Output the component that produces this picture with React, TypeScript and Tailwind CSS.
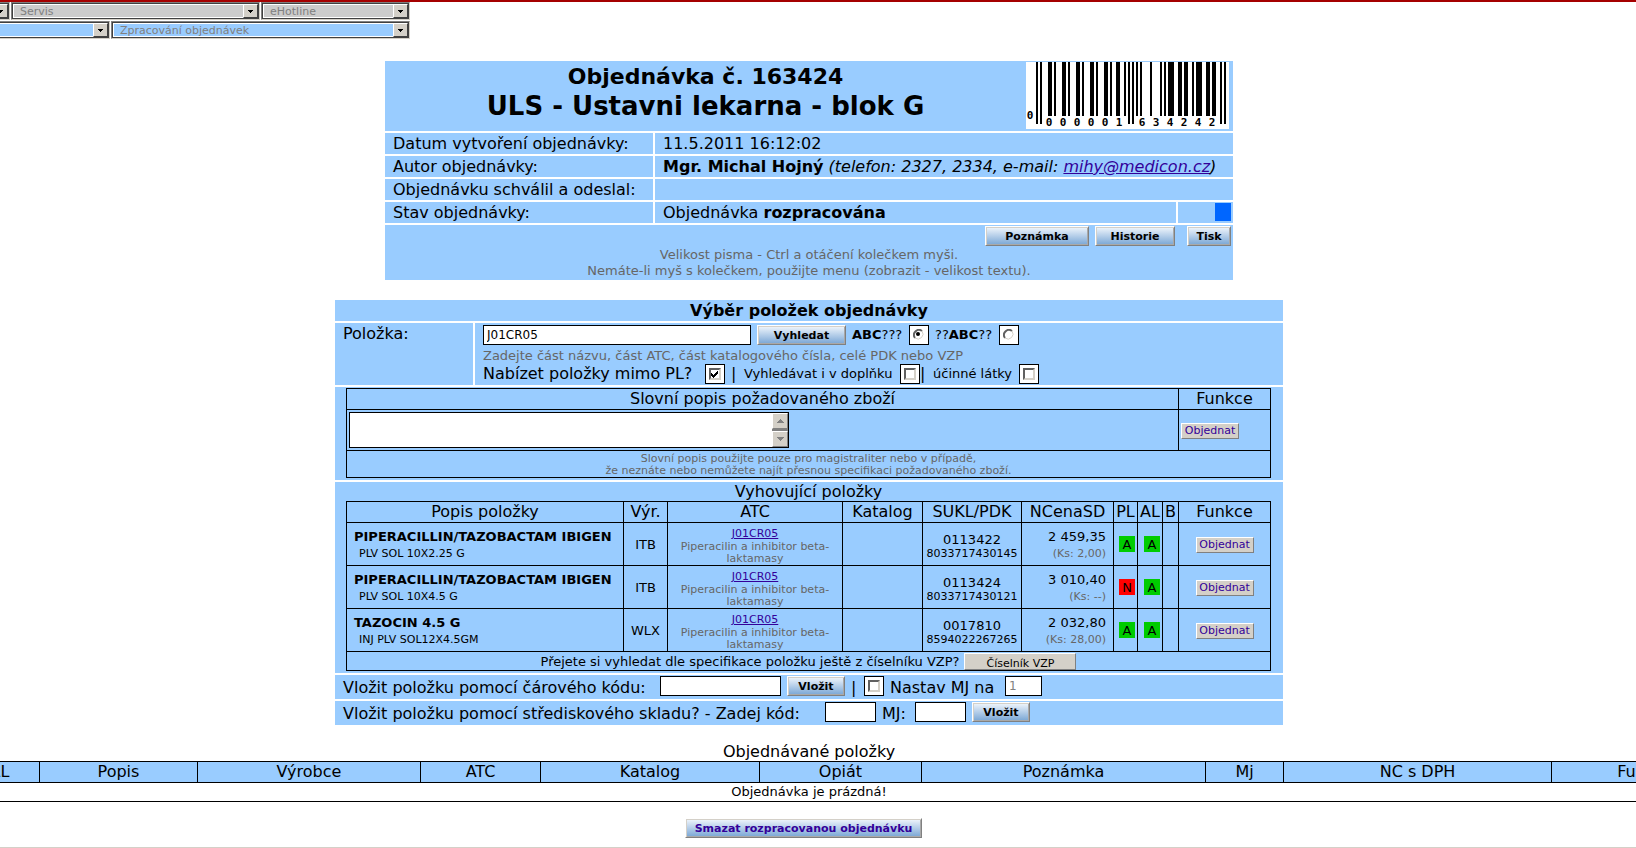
import React from 'react';

const bevel = 'border border-t-white border-l-white border-r-[#808080] border-b-[#808080] bg-[#d4d0c8]';

const items = [
  { name: 'PIPERACILLIN/TAZOBACTAM IBIGEN', desc: 'PLV SOL 10X2.25 G', maker: 'ITB', sukl: '0113422', pdk: '8033717430145', price: '2 459,35', ks: '(Ks: 2,00)', pl: 'A', al: 'A' },
  { name: 'PIPERACILLIN/TAZOBACTAM IBIGEN', desc: 'PLV SOL 10X4.5 G', maker: 'ITB', sukl: '0113424', pdk: '8033717430121', price: '3 010,40', ks: '(Ks: --)', pl: 'N', al: 'A' },
  { name: 'TAZOCIN 4.5 G', desc: 'INJ PLV SOL12X4.5GM', maker: 'WLX', sukl: '0017810', pdk: '8594022267265', price: '2 032,80', ks: '(Ks: 28,00)', pl: 'A', al: 'A' },
];

// EAN-13 digit patterns, left half (odd parity); the right half is the complement
const EAN = ['0001101', '0011001', '0010011', '0111101', '0100011', '0110001', '0101111', '0111011', '0110111', '0001011'];

function Barcode({ left, right }: { left: string; right: string }) {
  const bars: { x: number; tall: boolean }[] = [];
  let pos = 0;
  const push = (bits: string, tall: boolean) => {
    for (const bit of bits) {
      if (bit === '1') bars.push({ x: 10 + pos * 2, tall });
      pos += 1;
    }
  };
  push('101', true);
  for (const d of left) push(EAN[Number(d)], false);
  push('01010', true);
  for (const d of right) push(EAN[Number(d)].replace(/./g, (b) => (b === '1' ? '0' : '1')), false);
  push('101', true);

  return (
    <svg width="203" height="67" viewBox="0 0 203 67" role="img" aria-label="0000001634242" shapeRendering="crispEdges">
      <rect width="203" height="67" fill="#fff" />
      {bars.map((b) => (
        <rect key={b.x} x={b.x} y="0" width="2" height={b.tall ? 62 : 54} fill="#000" />
      ))}
      <g fontFamily="'DejaVu Sans Mono', monospace" fontSize="11" fontWeight="bold" textAnchor="middle">
        <text x="4" y="57">0</text>
        {left.split('').map((d, i) => (
          <text key={i} x={23 + i * 14} y="64">{d}</text>
        ))}
        {right.split('').map((d, i) => (
          <text key={i} x={116 + i * 14} y="64">{d}</text>
        ))}
      </g>
    </svg>
  );
}

function NavSelect({ label, className, color }: { label: string; className: string; color: string }) {
  return (
    <div className={`relative h-[18px] shrink-0 border border-t-[#808080] border-l-[#808080] border-r-[#d4d0c8] border-b-[#d4d0c8] ${className}`}>
      <select
        aria-label={label || 'Menu'}
        className={`block h-4 w-full appearance-none border border-[#404040] pt-px pl-[7px] text-[11px] leading-[14px] text-[#808080] outline outline-1 -outline-offset-2 outline-white ${color}`}
      >
        <option>{label}</option>
      </select>
      <span className="pointer-events-none absolute top-px right-px flex h-[14px] w-[15px] items-center justify-center border border-t-white border-l-white border-r-[#404040] border-b-[#404040] bg-[#d4d0c8]">
        <svg width="5" height="3" viewBox="0 0 5 3" shapeRendering="crispEdges">
          <path d="M0 0h5v1H0zM1 1h3v1H1zM2 2h1v1H2z" fill="#000" />
        </svg>
      </span>
    </div>
  );
}

function BlueButton({ children, className }: { children: React.ReactNode; className: string }) {
  return (
    <button
      type="button"
      className={`h-5 shrink-0 border border-t-white border-l-white border-r-[#808080] border-b-[#808080] bg-linear-to-b from-[#f2f7fc] to-[#78a5d4] pt-[2px] text-center text-[11px] leading-4 font-bold whitespace-nowrap shadow-[inset_1px_1px_0_#d4d0c8,inset_-1px_-1px_0_#a9a9a9] ${className}`}
    >
      {children}
    </button>
  );
}

function OrderButton() {
  return (
    <button type="button" className={`h-4 w-[58px] text-center text-[11px] leading-[14px] text-[#330099] ${bevel}`}>
      Objednat
    </button>
  );
}

function Tick({ id, checked = false }: { id: string; checked?: boolean }) {
  return (
    <span className="relative inline-flex size-5 shrink-0">
      <input
        id={id}
        type="checkbox"
        defaultChecked={checked}
        className="peer flex size-5 appearance-none items-center justify-center border border-black bg-white before:size-3 before:border-2 before:border-t-[#606060] before:border-l-[#606060] before:border-r-[#d4d0c8] before:border-b-[#d4d0c8] before:content-['']"
      />
      <svg className="pointer-events-none absolute top-[6px] left-[6px] hidden peer-checked:block" width="8" height="8" viewBox="0 0 8 8" shapeRendering="crispEdges">
        <path d="M0 3h1v3H0zM1 4h1v3H1zM2 5h1v3H2zM3 4h1v3H3zM4 3h1v3H4zM5 2h1v3H5zM6 1h1v3H6z" fill="#000" />
      </svg>
    </span>
  );
}

function Radio({ id, checked = false }: { id: string; checked?: boolean }) {
  return (
    <span className="relative inline-flex size-5 shrink-0">
      <input
        id={id}
        name="match"
        type="radio"
        defaultChecked={checked}
        className="peer block size-5 appearance-none border border-black bg-white"
      />
      <svg className="pointer-events-none absolute top-1 left-1" width="11" height="11" viewBox="0 0 11 11" fill="none">
        <path d="M2 9A5 5 0 0 1 9 2" stroke="#606060" strokeWidth="2" />
        <path d="M9 2A5 5 0 0 1 2 9" stroke="#d4d0c8" strokeWidth="1" />
      </svg>
      <span className="pointer-events-none absolute top-[7px] left-[7px] hidden size-1 rounded-full bg-black peer-checked:block" />
    </span>
  );
}

function Badge({ value }: { value: string }) {
  return (
    <span className={`mr-[2px] ml-auto block size-4 text-center leading-[17px] ${value === 'N' ? 'bg-[#ff0000]' : 'bg-[#00cc00]'}`}>{value}</span>
  );
}

function ScrollArrow({ up = false }: { up?: boolean }) {
  return (
    <span className={`flex h-4 w-4 items-center justify-center ${bevel}`}>
      <svg width="7" height="4" viewBox="0 0 7 4" shapeRendering="crispEdges">
        <path d={up ? 'M3 0h1v1H3zM2 1h3v1H2zM1 2h5v1H1zM0 3h7v1H0z' : 'M0 0h7v1H0zM1 1h5v1H1zM2 2h3v1H2zM3 3h1v1H3z'} fill="#808080" />
      </svg>
    </span>
  );
}

function OrderHeader() {
  const label = 'w-[268px] pl-2 whitespace-nowrap';
  const value = 'flex-1 pl-2 whitespace-nowrap';
  return (
    <section className="mx-auto flex w-full max-w-[848px] flex-col gap-[2px] leading-[21px]">
      <div className="flex h-[70px] bg-[#99ccff]">
        <div className="flex-1 pt-[2px] text-center font-bold">
          <h1 className="text-[22px] leading-[28px]">Objednávka č. 163424</h1>
          <h2 className="text-[26px] leading-[30px]">ULS - Ustavni lekarna - blok G</h2>
        </div>
        <div className="pt-px pr-1">
          <Barcode left="000001" right="634242" />
        </div>
      </div>
      <dl className="flex flex-col gap-[2px]">
        <div className="flex h-[21px] gap-[2px] *:bg-[#99ccff]">
          <dt className={label}>Datum vytvoření objednávky:</dt>
          <dd className={value}>11.5.2011 16:12:02</dd>
        </div>
        <div className="flex h-[21px] gap-[2px] *:bg-[#99ccff]">
          <dt className={label}>Autor objednávky:</dt>
          <dd className={value}>
            <b>Mgr. Michal Hojný</b>{' '}
            <i>
              (telefon: 2327, 2334, e-mail: <a href="mailto:mihy@medicon.cz" className="text-[#330099] underline">mihy@medicon.cz</a>)
            </i>
          </dd>
        </div>
        <div className="flex h-[21px] gap-[2px] *:bg-[#99ccff]">
          <dt className={label}>Objednávku schválil a odeslal:</dt>
          <dd className={value} />
        </div>
        <div className="flex h-[21px] gap-[2px] *:bg-[#99ccff]">
          <dt className={label}>Stav objednávky:</dt>
          <dd className={value}>
            Objednávka <b>rozpracována</b>
          </dd>
          <dd className="flex w-[55px] justify-end py-px pr-[2px]">
            <span className="block h-[18px] w-4 bg-[#0066ff]" />
          </dd>
        </div>
      </dl>
      <div className="h-[55px] bg-[#99ccff] pt-px">
        <div className="flex justify-end pr-[2px]">
          <BlueButton className="mr-[6px] w-[104px]">Poznámka</BlueButton>
          <BlueButton className="mr-3 w-[80px]">Historie</BlueButton>
          <BlueButton className="w-11">Tisk</BlueButton>
        </div>
        <p className="pt-px text-center text-[13px] leading-4 text-[#666666]">
          Velikost pisma - Ctrl a otáčení kolečkem myši.
          <br />
          Nemáte-li myš s kolečkem, použijte menu (zobrazit - velikost textu).
        </p>
      </div>
    </section>
  );
}

function FreeTextTable() {
  return (
    <table className="w-[925px] table-fixed border-collapse border border-black [&_td]:border [&_td]:border-black [&_th]:border [&_th]:border-black">
      <colgroup>
        <col />
        <col className="w-[92px]" />
      </colgroup>
      <thead>
        <tr className="h-[21px] leading-5">
          <th className="font-normal">Slovní popis požadovaného zboží</th>
          <th className="font-normal">Funkce</th>
        </tr>
      </thead>
      <tbody>
        <tr className="h-[41px]">
          <td className="pl-[2px]">
            <div className="relative h-9 w-[440px]">
              <textarea aria-label="Slovní popis" className="block h-9 w-full resize-none overflow-hidden border border-black bg-white px-1 text-[13px]" />
              <div className="pointer-events-none absolute top-px right-px flex h-[34px] flex-col justify-between bg-[#808080]">
                <ScrollArrow up />
                <ScrollArrow />
              </div>
            </div>
          </td>
          <td className="pl-[2px] leading-4">
            <OrderButton />
          </td>
        </tr>
        <tr className="h-[27px]">
          <td colSpan={2} className="pt-[2px] text-center text-[11px] leading-3 text-[#666666]">
            Slovní popis použijte pouze pro magistraliter nebo v případě,
            <br />
            že neznáte nebo nemůžete najít přesnou specifikaci požadovaného zboží.
          </td>
        </tr>
      </tbody>
    </table>
  );
}

function ItemsTable() {
  return (
    <table className="w-[925px] table-fixed border-collapse border border-black [&_td]:border [&_td]:border-black [&_th]:border [&_th]:border-black [&_th]:font-normal">
      <colgroup>
        <col className="w-[277px]" />
        <col className="w-[44px]" />
        <col className="w-[175px]" />
        <col className="w-[80px]" />
        <col className="w-[99px]" />
        <col className="w-[92px]" />
        <col className="w-[24px]" />
        <col className="w-[25px]" />
        <col className="w-[16px]" />
        <col className="w-[92px]" />
      </colgroup>
      <thead>
        <tr className="h-[21px] leading-5">
          <th>Popis položky</th>
          <th>Výr.</th>
          <th>ATC</th>
          <th>Katalog</th>
          <th>SUKL/PDK</th>
          <th>NCenaSD</th>
          <th>PL</th>
          <th>AL</th>
          <th>B</th>
          <th>Funkce</th>
        </tr>
      </thead>
      <tbody>
        {items.map((item) => (
          <tr key={item.sukl} className="h-[43px] text-center text-[13px]">
            <td className="pt-1 pl-[7px] text-left whitespace-nowrap">
              <div className="leading-4 font-bold">{item.name}</div>
              <div className="pl-[5px] text-[11px] leading-[18px]">{item.desc}</div>
            </td>
            <td className="pt-[2px]">{item.maker}</td>
            <td className="pt-[5px] text-[11px] leading-3 text-[#666666]">
              <a href="#atc" className="text-[#330099] underline">J01CR05</a>
              <div className="px-2 pt-px">Piperacilin a inhibitor beta-laktamasy</div>
            </td>
            <td />
            <td className="pt-1">
              <div className="leading-[14px]">{item.sukl}</div>
              <div className="text-[11px] leading-[13px]">{item.pdk}</div>
            </td>
            <td className="pt-1 pr-[7px] text-right">
              <div className="leading-4">{item.price}</div>
              <div className="text-[11px] leading-[18px] text-[#666666]">{item.ks}</div>
            </td>
            <td className="p-0"><Badge value={item.pl} /></td>
            <td className="p-0"><Badge value={item.al} /></td>
            <td />
            <td className="leading-4"><OrderButton /></td>
          </tr>
        ))}
        <tr className="h-[19px]">
          <td colSpan={10}>
            <div className="flex items-center justify-center gap-[5px] text-[13px] leading-[17px]">
              <label htmlFor="vzp">Přejete si vyhledat dle specifikace položku ještě z číselníku VZP?</label>
              <button id="vzp" type="button" className={`h-[17px] w-28 pt-1 text-[11px] leading-3 ${bevel}`}>Číselník VZP</button>
            </div>
          </td>
        </tr>
      </tbody>
    </table>
  );
}

function ItemPicker() {
  const box = 'h-5 border border-black bg-white px-[3px] text-[12px]';
  return (
    <section className="mx-auto mt-5 flex w-full max-w-[948px] flex-col gap-[2px] *:bg-[#99ccff]">
      <h3 className="h-[21px] text-center leading-[21px] font-bold">Výběr položek objednávky</h3>
      <div className="flex h-[62px] gap-[2px] bg-white! *:bg-[#99ccff]">
        <label htmlFor="item" className="w-[138px] pl-2 leading-[22px]">Položka:</label>
        <div className="flex-1 pt-px pl-2 whitespace-nowrap">
          <div className="flex items-center gap-[6px] text-[13px] leading-[22px]">
            <input id="item" defaultValue="J01CR05" className={`w-[268px] ${box}`} />
            <BlueButton className="w-[89px]">Vyhledat</BlueButton>
            <label htmlFor="starts" className="w-[51px]"><b>ABC</b>???</label>
            <Radio id="starts" checked />
            <label htmlFor="contains" className="w-[58px]">??<b>ABC</b>??</label>
            <Radio id="contains" />
          </div>
          <p className="pt-[2px] text-[13px] leading-[15px] text-[#666666]">Zadejte část názvu, část ATC, část katalogového čísla, celé PDK nebo VZP</p>
          <div className="flex items-center gap-[6px] text-[13px] leading-[22px]">
            <label htmlFor="outside" className="w-[216px] text-[16px]">Nabízet položky mimo PL?</label>
            <Tick id="outside" checked />
            <span className="w-[7px] text-[16px]">|</span>
            <label htmlFor="addon" className="w-[150px]">Vyhledávat i v doplňku</label>
            <Tick id="addon" />
            <span className="-ml-[6px] w-[7px] text-[16px]">|</span>
            <label htmlFor="substance" className="w-[80px]">účinné látky</label>
            <Tick id="substance" />
          </div>
        </div>
      </div>
      <div className="h-[93px] pt-px pl-[11px]">
        <FreeTextTable />
      </div>
      <div className="h-[191px] pl-[11px]">
        <h4 className="w-[925px] text-center leading-[19px]">Vyhovující položky</h4>
        <ItemsTable />
      </div>
      <div className="flex h-6 gap-[6px] pt-px pl-2 leading-[23px] whitespace-nowrap">
        <label htmlFor="barcode" className="w-[311px]">Vložit položku pomocí čárového kódu:</label>
        <input id="barcode" className={`w-[121px] ${box}`} />
        <BlueButton className="w-[58px]">Vložit</BlueButton>
        <span className="w-[7px]">|</span>
        <Tick id="setmj" />
        <label htmlFor="setmj" className="w-[109px]">Nastav MJ na</label>
        <input aria-label="MJ" defaultValue="1" className={`w-[37px] text-[#808080] ${box}`} />
      </div>
      <div className="flex h-6 gap-[6px] pt-px pl-2 leading-[23px] whitespace-nowrap">
        <label htmlFor="stock" className="w-[476px]">Vložit položku pomocí střediskového skladu? - Zadej kód:</label>
        <input id="stock" className={`w-[51px] ${box}`} />
        <label htmlFor="mj" className="w-[27px]">MJ:</label>
        <input id="mj" className={`w-[51px] ${box}`} />
        <BlueButton className="w-[58px]">Vložit</BlueButton>
      </div>
    </section>
  );
}

function OrderedItems() {
  return (
    <section className="mt-[17px] overflow-hidden">
      <h3 className="pr-[18px] text-center leading-[19px]">Objednávané položky</h3>
      <div className="-mr-[104px] -ml-[41px]">
        <table className="w-full table-fixed border-collapse border border-black">
          <colgroup>
            <col className="w-[80px]" />
            <col className="w-[158px]" />
            <col className="w-[223px]" />
            <col className="w-[120px]" />
            <col className="w-[219px]" />
            <col className="w-[162px]" />
            <col className="w-[284px]" />
            <col className="w-[78px]" />
            <col className="w-[268px]" />
            <col />
          </colgroup>
          <thead>
            <tr className="h-[21px] bg-[#99ccff] leading-5 [&_th]:border [&_th]:border-black [&_th]:font-normal">
              <th>AL</th>
              <th>Popis</th>
              <th>Výrobce</th>
              <th>ATC</th>
              <th>Katalog</th>
              <th>Opiát</th>
              <th>Poznámka</th>
              <th>Mj</th>
              <th>NC s DPH</th>
              <th>Funkce</th>
            </tr>
          </thead>
          <tbody>
            <tr className="h-[19px]">
              <td colSpan={10} className="pr-[81px] text-center text-[13px] leading-[18px]">Objednávka je prázdná!</td>
            </tr>
          </tbody>
        </table>
      </div>
    </section>
  );
}

export default function App() {
  return (
    <main className="min-h-screen overflow-hidden border-t-2 border-[#a50000] bg-white font-['Verdana','DejaVu_Sans',sans-serif] text-[16px] text-black">
      <nav className="flex flex-col gap-px">
        <div className="flex gap-px">
          <NavSelect label="" className="-ml-2 w-[18px]" color="bg-[#cccccc]" />
          <NavSelect label="Servis" className="w-[249px]" color="bg-[#cccccc]" />
          <NavSelect label="eHotline" className="w-[149px]" color="bg-[#cccccc]" />
        </div>
        <div className="flex gap-px">
          <NavSelect label="" className="-ml-2 w-[118px]" color="bg-[#99ccff]" />
          <NavSelect label="Zpracování objednávek" className="w-[299px]" color="bg-[#99ccff]" />
        </div>
      </nav>
      <div className="mt-[22px] pr-[18px]">
        <OrderHeader />
        <ItemPicker />
      </div>
      <OrderedItems />
      <div className="mt-4 flex justify-center border-b border-[#d4d0c8] pr-[29px] pb-[9px]">
        <BlueButton className="w-[237px] text-[#330099]">Smazat rozpracovanou objednávku</BlueButton>
      </div>
    </main>
  );
}
